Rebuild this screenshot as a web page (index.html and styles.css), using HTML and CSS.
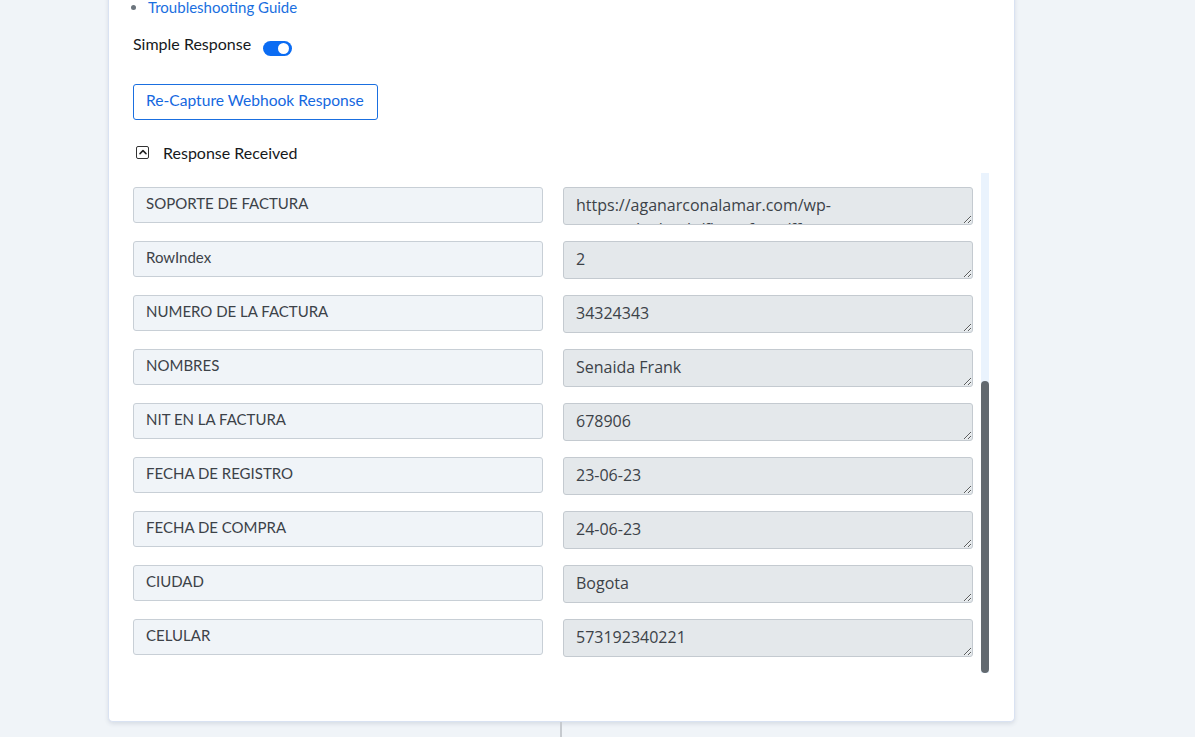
FILE: index.html
```html
<!DOCTYPE html>
<html lang="es">
<head>
<meta charset="utf-8">
<title>Webhook Response</title>
<link rel="stylesheet" href="styles.css">
</head>
<body>
<div class="card">
  <ul class="links">
    <li><a href="#">Troubleshooting Guide</a></li>
  </ul>
  <div class="simple">
    <span class="simple-label">Simple Response</span>
    <span class="toggle"><span class="knob"></span></span>
  </div>
  <button class="btn-outline" type="button">Re-Capture Webhook Response</button>
  <div class="received">
    <span class="chev">
      <svg width="8" height="6" viewBox="0 0 8 6"><path d="M1 4.6 L4 1.6 L7 4.6" fill="none" stroke="#222" stroke-width="1.5" stroke-linecap="round" stroke-linejoin="round"/></svg>
    </span>
    <span>Response Received</span>
  </div>
  <div class="scroll-wrap">
    <div class="scroller">
      <div class="rows">
        <div class="row"><div class="key">NOMBRE DEL FORMULARIO</div><textarea class="val" readonly>Registro de Facturas</textarea></div>
        <div class="row"><div class="key">FECHA</div><textarea class="val" readonly>23-06-23</textarea></div>
        <div class="row"><div class="key">CORREO ELECTRONICO</div><textarea class="val" readonly>senaida.frank@gmail.com</textarea></div>
        <div class="row"><div class="key">APELLIDOS</div><textarea class="val" readonly>Frank</textarea></div>
        <div class="row"><div class="key">CEDULA</div><textarea class="val" readonly>1020304050</textarea></div>
        <div class="row"><div class="key">DIRECCION</div><textarea class="val" readonly>Calle 45 # 12-30</textarea></div>
        <div class="row"><div class="key">VALOR DE LA FACTURA</div><textarea class="val" readonly>150000</textarea></div>
        <div class="row"><div class="key">SOPORTE DE FACTURA</div><textarea class="val" readonly>https://aganarconalamar.com/wp-content/uploads/fluentform/ff-2f8c1a9e4b7d3c6a5e0f9b2d1c8a7e6f_factura.jpg</textarea></div>
        <div class="row"><div class="key">RowIndex</div><textarea class="val" readonly>2</textarea></div>
        <div class="row"><div class="key">NUMERO DE LA FACTURA</div><textarea class="val" readonly>34324343</textarea></div>
        <div class="row"><div class="key">NOMBRES</div><textarea class="val" readonly>Senaida Frank</textarea></div>
        <div class="row"><div class="key">NIT EN LA FACTURA</div><textarea class="val" readonly>678906</textarea></div>
        <div class="row"><div class="key">FECHA DE REGISTRO</div><textarea class="val" readonly>23-06-23</textarea></div>
        <div class="row"><div class="key">FECHA DE COMPRA</div><textarea class="val" readonly>24-06-23</textarea></div>
        <div class="row"><div class="key">CIUDAD</div><textarea class="val" readonly>Bogota</textarea></div>
        <div class="row"><div class="key">CELULAR</div><textarea class="val" readonly>573192340221</textarea></div>
      </div>
    </div>
    <div class="track"><div class="thumb"></div></div>
  </div>
</div>
<div class="connector"></div>
</body>
</html>
```

FILE: styles.css
```css
* { box-sizing: border-box; }
html, body { margin: 0; padding: 0; }
body {
  background: #f0f4f8;
  font-family: "Lato", "Open Sans", sans-serif;
  color: #1f2327;
  height: 737px;
  overflow: hidden;
}
.card {
  margin: -20px 0 0 108px;
  width: 907px;
  background: #fff;
  border: 1px solid #d9e2f2;
  border-top: none;
  border-radius: 0 0 5px 5px;
  box-shadow: 0 2px 4px rgba(40, 60, 90, 0.12);
  padding: 17px 24px 48px;
}
.links {
  margin: 0;
  padding: 0 0 0 15px;
  font-size: 15px;
  line-height: 20px;
  color: #6c757d;
}
.links a { color: #1a6fe0; text-decoration: none; }
.simple {
  display: flex;
  align-items: flex-start;
  margin-top: 16px;
  height: 23px;
  font-size: 16px;
  line-height: 22px;
  color: #16191c;
}
.toggle {
  position: relative;
  width: 29px;
  height: 15px;
  border-radius: 8px;
  background: #0b6cf3;
  margin: 8px 0 0 12px;
}
.knob {
  position: absolute;
  right: 3px;
  top: 2px;
  width: 11px;
  height: 11px;
  border-radius: 50%;
  background: #fff;
}
.btn-outline {
  display: block;
  margin-top: 28px;
  height: 36px;
  width: 245px;
  padding: 0 12px 4px;
  text-align: left;
  background: #fff;
  border: 1px solid #1a6fe0;
  border-radius: 3px;
  color: #1568df;
  font-family: inherit;
  font-size: 15.6px;
  white-space: nowrap;
}
.received {
  display: flex;
  align-items: center;
  gap: 14px;
  margin-top: 22px;
  height: 20px;
  font-size: 16px;
  color: #16191c;
  padding-left: 3px;
}
.chev {
  width: 13px;
  height: 13px;
  border: 1px solid #333;
  border-radius: 2px;
  display: flex;
  align-items: center;
  justify-content: center;
}
.scroll-wrap {
  margin-top: 11px;
  height: 500px;
  display: flex;
  gap: 8px;
}
.scroller {
  height: 500px;
  width: 840px;
  overflow: hidden;
  display: flex;
  flex-direction: column-reverse;
}
.track {
  width: 8px;
  height: 500px;
  background: #eaf3fd;
  display: flex;
  flex-direction: column;
}
.thumb {
  margin-top: auto;
  height: 292px;
  background: #62696f;
  border-radius: 4px;
}
.rows {
  display: flex;
  flex-direction: column;
  gap: 16px;
  padding-bottom: 16px;
}
.row {
  display: flex;
  align-items: flex-start;
  gap: 20px;
  flex: none;
}
.key {
  width: 410px;
  height: 36px;
  background: #f0f4f8;
  border: 1px solid #c8cfd6;
  border-radius: 3px;
  padding: 5px 12px 0;
  font-size: 15px;
  line-height: 20px;
  color: #3c4248;
}
.val {
  display: block;
  width: 410px;
  height: 38px;
  margin: 0;
  background: #e4e8eb;
  border: 1px solid #c4cad0;
  border-radius: 3px;
  padding: 5px 12px 0;
  font-family: "Open Sans", sans-serif;
  font-size: 16px;
  line-height: 24px;
  color: #3c4248;
  overflow: hidden;
  resize: vertical;
  outline: none;
}
.connector {
  width: 2px;
  height: 30px;
  margin-left: 560px;
  background: #c6cacf;
}
```
